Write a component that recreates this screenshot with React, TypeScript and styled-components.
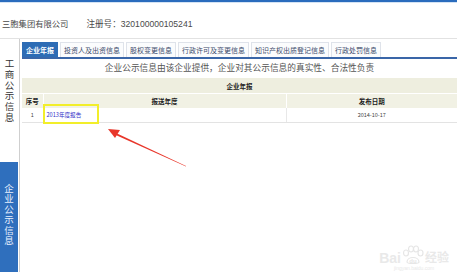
import React from "react"
import styled, { createGlobalStyle } from "styled-components"

const GlobalStyle = createGlobalStyle`
  html, body {
    margin: 0;
    padding: 0;
    background: #fff;
  }
  body {
    width: 457px;
    height: 272px;
    overflow: hidden;
    font-family: "Liberation Sans", "Noto Sans CJK SC", sans-serif;
    color: #333;
  }
`

const Page = styled.div`
  position: relative;
  width: 457px;
  height: 272px;
  display: flex;
  flex-direction: column;
`

const TopBar = styled.div`
  height: 2px;
  background: #2a6cbd;
  border-bottom: 1px solid #d4e3f4;
`

const Header = styled.div`
  height: 35px;
  display: flex;
  align-items: center;
  padding: 4px 0 0 2px;
  box-sizing: border-box;
  font-size: 8.3px;
  color: #4a4a4a;
  gap: 18px;
`

const RegNo = styled.span`
  font-size: 8.6px;
`

const Body = styled.div`
  flex: 1;
  display: flex;
  border-top: 1px solid #e2e2e2;
  min-height: 0;
`

const Sidebar = styled.div`
  width: 19px;
  display: flex;
  flex-direction: column;
  border-right: 1px solid #cfcfcf;
`

const SideSection = styled.div<{ $active?: boolean }>`
  height: ${(p) => (p.$active ? "auto" : "123px")};
  flex: ${(p) => (p.$active ? 1 : "none")};
  background: ${(p) => (p.$active ? "#2f6fbd" : "#fff")};
  color: ${(p) => (p.$active ? "#e9f1ff" : "#333")};
  margin-right: ${(p) => (p.$active ? "1px" : "0")};
  display: flex;
  justify-content: center;
  padding-top: ${(p) => (p.$active ? "21px" : "19px")};
  box-sizing: border-box;
`

const VerticalText = styled.div<{ $step: number }>`
  width: 10px;
  font-family: "Noto Sans CJK SC", sans-serif;
  font-size: 9.5px;
  line-height: ${(p) => p.$step}px;
  text-align: center;
  word-break: break-all;
`

const Content = styled.div`
  flex: 1;
  padding: 3px 0 0 2px;
  display: flex;
  flex-direction: column;
  min-width: 0;
`

const TabStrip = styled.div`
  display: flex;
  gap: 2px;
  border-bottom: 2px solid #3a66a8;
`

const Tab = styled.div<{ $active?: boolean }>`
  height: 14px;
  padding: 0 3px;
  border: 1px solid ${(p) => (p.$active ? "#2d6cb5" : "#dfe3ea")};
  border-bottom: none;
  background: ${(p) => (p.$active ? "#2d6cb5" : "#fbfcfd")};
  color: ${(p) => (p.$active ? "#fff" : "#3c4b6b")};
  font-family: "Noto Sans CJK SC", sans-serif;
  font-weight: ${(p) => (p.$active ? 700 : 400)};
  font-size: 7px;
  line-height: 14px;
  white-space: nowrap;
`

const Notice = styled.div`
  height: 19px;
  line-height: 18px;
  text-align: center;
  font-family: "Noto Sans CJK SC", sans-serif;
  font-size: 8.7px;
  color: #555;
`

const Table = styled.table`
  width: 100%;
  border-collapse: collapse;
  table-layout: fixed;
  font-family: "Noto Sans CJK SC", sans-serif;
`

const Col = styled.col<{ $w?: number }>`
  width: ${(p) => (p.$w ? `${p.$w}px` : "auto")};
`

const TitleCell = styled.th`
  height: 15px;
  padding: 0;
  background: #eeeedf;
  font-size: 6.5px;
  font-weight: 700;
  color: #222;
  border-bottom: 1px solid #fff;
`

const HeadCell = styled.th`
  height: 14px;
  padding: 0;
  background: #f1f1e4;
  font-size: 6.5px;
  font-weight: 700;
  color: #222;
  border-left: 1px solid #fff;
  &:first-child {
    border-left: none;
  }
`

const Cell = styled.td<{ $align?: string }>`
  height: 14px;
  padding: 0 0 0 ${(p) => (p.$align === "left" ? "3px" : "0")};
  text-align: ${(p) => p.$align || "center"};
  font-size: 5.5px;
  color: #444;
  border-left: 1px solid #e8e8e8;
  border-bottom: 1px solid #e3e3e3;
  &:first-child {
    border-left: none;
  }
`

const ReportLink = styled.a`
  color: #3030c8;
  text-decoration: none;
  font-size: 5.6px;
`

const Highlight = styled.div`
  position: absolute;
  left: 43px;
  top: 104px;
  width: 52px;
  height: 16px;
  border: 2px solid #f2ee2a;
`

const Arrow = styled.svg`
  position: absolute;
  left: 100px;
  top: 121px;
`

const Watermark = styled.div`
  position: absolute;
  right: 8px;
  bottom: 0;
  display: flex;
  flex-direction: column;
  align-items: center;
  color: #e9e9e9;
  font-family: "Liberation Sans", "Noto Sans CJK SC", sans-serif;
`

const WaterRow = styled.div`
  display: flex;
  align-items: flex-end;
  gap: 1px;
  font-size: 14px;
  font-weight: 700;
  line-height: 14px;
`

const WaterSmall = styled.div`
  font-size: 5px;
  line-height: 7px;
`

const tabs = ["企业年报", "投资人及出资信息", "股权变更信息", "行政许可及变更信息", "知识产权出质登记信息", "行政处罚信息"]

export default function App() {
  return (
    <>
      <GlobalStyle />
      <Page>
        <TopBar />
        <Header>
          <span>三胞集团有限公司</span>
          <RegNo>注册号：320100000105241</RegNo>
        </Header>
        <Body>
          <Sidebar>
            <SideSection>
              <VerticalText $step={10.8}>工商公示信息</VerticalText>
            </SideSection>
            <SideSection $active>
              <VerticalText $step={10.4}>企业公示信息</VerticalText>
            </SideSection>
          </Sidebar>
          <Content>
            <TabStrip>
              {tabs.map((t, i) => (
                <Tab key={t} $active={i === 0}>
                  {t}
                </Tab>
              ))}
            </TabStrip>
            <Notice>企业公示信息由该企业提供，企业对其公示信息的真实性、合法性负责</Notice>
            <Table>
              <colgroup>
                <Col $w={21} />
                <Col $w={243} />
                <Col />
              </colgroup>
              <thead>
                <tr>
                  <TitleCell colSpan={3}>企业年报</TitleCell>
                </tr>
                <tr>
                  <HeadCell>序号</HeadCell>
                  <HeadCell>报送年度</HeadCell>
                  <HeadCell>发布日期</HeadCell>
                </tr>
              </thead>
              <tbody>
                <tr>
                  <Cell>1</Cell>
                  <Cell $align="left">
                    <ReportLink href="#">2013年度报告</ReportLink>
                  </Cell>
                  <Cell>2014-10-17</Cell>
                </tr>
              </tbody>
            </Table>
          </Content>
        </Body>
        <Highlight />
        <Arrow width="92" height="48" viewBox="0 0 92 48">
          <path d="M86 45 L16 12 L15.2 13.8 L86 45.6 Z" fill="#e8362a" />
          <path d="M8 8 L20 9 L15 17 Z" fill="#e8362a" />
        </Arrow>
        <Watermark>
          <WaterRow>
            <span>Bai</span>
            <svg width="22" height="20" viewBox="0 0 22 20">
              <g fill="none" stroke="#e6e6e6" strokeWidth="1.2">
                <ellipse cx="4" cy="8" rx="2.5" ry="3" />
                <ellipse cx="9" cy="4" rx="2.5" ry="3" />
                <ellipse cx="14" cy="4" rx="2.5" ry="3" />
                <ellipse cx="18.5" cy="8" rx="2.5" ry="3" />
                <path d="M5 17 C5 11 17 11 17 17 C17 19 5 19 5 17 Z" />
              </g>
              <text x="11" y="17.5" textAnchor="middle" fontSize="6" fontWeight="700" fill="#e6e6e6" fontFamily="Liberation Sans, sans-serif">du</text>
            </svg>
            <span style={{ fontSize: 12 }}>经验</span>
          </WaterRow>
          <WaterSmall>jingyan.baidu.com</WaterSmall>
        </Watermark>
      </Page>
    </>
  )
}
